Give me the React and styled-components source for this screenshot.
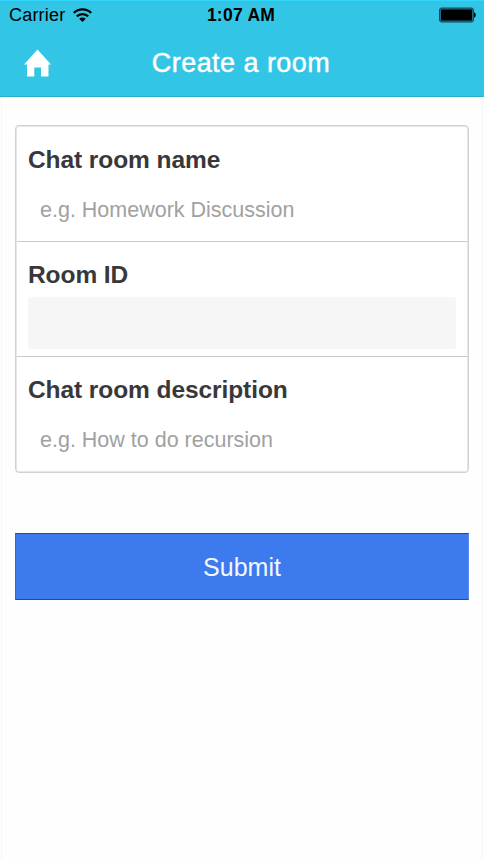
import React from "react";
import styled, { createGlobalStyle } from "styled-components";

const GlobalStyle = createGlobalStyle`
  * { box-sizing: border-box; }
  html, body { margin: 0; background: #fefefe; }
  body { font-family: "Liberation Sans", Arial, sans-serif; }
`;

const Screen = styled.div`
  width: 484px;
  height: 859px;
  overflow: hidden;
  display: flex;
  flex-direction: column;
  background: #fefefe;
`;

const Header = styled.header`
  height: 97px;
  flex: none;
  background: #33c5e5;
  border-top: 1px solid #31d7fb;
  border-bottom: 1px solid #29afce;
`;

const StatusBar = styled.div`
  height: 28px;
  padding: 0 8px 0 9px;
  display: grid;
  grid-template-columns: 1fr auto 1fr;
  align-items: center;
  color: #000;
  font-size: 18px;
  line-height: 26px;
`;

const Carrier = styled.div`
  display: flex;
  align-items: center;
  gap: 8px;
  letter-spacing: 0.2px;
`;

const Clock = styled.div`
  margin-right: 3px;
  font-size: 17.5px;
  font-weight: 700;
  letter-spacing: 0.25px;
`;

const BatteryIcon = styled.svg`
  justify-self: end;
`;

const NavBar = styled.div`
  height: 67px;
  padding: 1px 24px 0;
  display: grid;
  grid-template-columns: 28px 1fr 28px;
  align-items: center;
`;

const HomeButton = styled.button`
  display: block;
  width: 28px;
  height: 28px;
  padding: 0;
  border: 0;
  background: none;
  svg { display: block; }
`;

const Title = styled.h1`
  margin: 0 2px 0 0;
  text-align: center;
  color: #fff;
  font-size: 27px;
  font-weight: 400;
  line-height: 34px;
  letter-spacing: 0.45px;
  -webkit-text-stroke: 0.45px #fff;
`;

const Content = styled.main`
  flex: 1;
  margin: 0 1px;
  padding: 28px 14px 0;
  border: 1px solid #f6f6f6;
  border-width: 0 1px;
  display: flex;
  flex-direction: column;
  gap: 60px;
`;

const Card = styled.div`
  margin: 0 -1px;
  height: 348px;
  border: 1px solid #d2d2d2;
  border-radius: 4px;
  box-shadow: inset 0 0 0 1px #e6e6e6;
  background: #fff;
  padding: 1px;
  display: flex;
  flex-direction: column;
`;

const Field = styled.label`
  display: block;
  height: 114px;
  padding: 15px 11px 0;
  & + & { border-top: 1px solid #cbcbcb; height: 115px; }
`;

const FieldLabel = styled.span`
  display: block;
  height: 40px;
  line-height: 36px;
  font-size: 24.5px;
  font-weight: 700;
  letter-spacing: -0.08px;
  color: #38383a;
`;

const Input = styled.input`
  display: block;
  width: 100%;
  height: 52px;
  padding: 4px 12px 0;
  border: 0;
  border-radius: 3px;
  outline: none;
  background: ${(p) => (p.disabled ? "#f6f6f6" : "transparent")};
  font: 400 21.5px "Liberation Sans", Arial, sans-serif;
  &::placeholder { color: #a1a1a1; opacity: 1; }
`;

const SubmitButton = styled.button`
  height: 67px;
  margin: 0 -1px;
  padding: 2px 0 0;
  border: 1px solid #0b4bd8;
  border-left-color: #3067df;
  border-right-color: #5b8bf0;
  background: #3d7aee;
  color: #f3f7ff;
  font: 400 25px "Liberation Sans", Arial, sans-serif;
`;

export default function App() {
  return (
    <>
      <GlobalStyle />
      <Screen>
        <Header>
          <StatusBar>
            <Carrier>
              <span>Carrier</span>
              <svg width="19" height="14" viewBox="0 0 19 14" fill="none" stroke="#000" strokeWidth="2.3">
                <path d="M.8 4.9a12.4 12.4 0 0 1 17.4 0" />
                <path d="M3.8 8.4a8.2 8.2 0 0 1 11.4 0" />
                <path d="M6.2 10.8a4.7 4.7 0 0 1 6.6 0L9.5 14z" fill="#000" stroke="none" />
              </svg>
            </Carrier>
            <Clock>1:07 AM</Clock>
            <BatteryIcon width="38" height="16" viewBox="0 0 38 16">
              <rect x="1.5" y="1" width="34" height="14" rx="2" fill="#1c7084" stroke="#16495a" />
              <rect x="3" y="2.5" width="31" height="11" rx=".5" fill="#000" />
              <path d="M36 5.3c2.3.6 2.3 4.8 0 5.4z" fill="#000" />
            </BatteryIcon>
          </StatusBar>
          <NavBar>
            <HomeButton aria-label="Home">
              <svg width="28" height="28" viewBox="0 0 28 28" fill="#fff">
                <path d="M13.5 .5 L27 15.5 H24.5 V27.6 H17 V18.5 H10.3 V27.6 H3 V15.5 H0Z" />
              </svg>
            </HomeButton>
            <Title>Create a room</Title>
          </NavBar>
        </Header>
        <Content>
          <Card>
            <Field>
              <FieldLabel>Chat room name</FieldLabel>
              <Input placeholder="e.g. Homework Discussion" />
            </Field>
            <Field>
              <FieldLabel>Room ID</FieldLabel>
              <Input disabled />
            </Field>
            <Field>
              <FieldLabel>Chat room description</FieldLabel>
              <Input placeholder="e.g. How to do recursion" />
            </Field>
          </Card>
          <SubmitButton>Submit</SubmitButton>
        </Content>
      </Screen>
    </>
  );
}
